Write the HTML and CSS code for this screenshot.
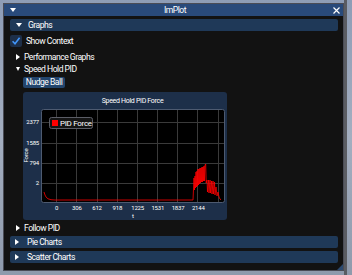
FILE: index.html
```html
<!DOCTYPE html>
<html>
<head>
<meta charset="utf-8">
<link rel="stylesheet" href="styles.css">
</head>
<body>
<div class="window">
  <div class="titlebar">
    <span class="tri-down tb-tri"></span>
    <span class="title">ImPlot</span>
    <svg class="close" width="7" height="7" viewBox="0 0 7 7"><path d="M0.5 0.5L6.5 6.5M6.5 0.5L0.5 6.5" stroke="#fff" stroke-width="1.2"/></svg>
  </div>
  <div class="content">
    <div class="header"><span class="tri-down"></span><span>Graphs</span></div>
    <div class="check"><span class="box"><svg width="12" height="12" viewBox="0 0 12 12"><path d="M2.6 6.2L5 8.7L9.6 2.8" fill="none" stroke="#4296fa" stroke-width="1.6"/></svg></span><span>Show Context</span></div>
    <div class="node"><span class="tri-right"></span><span>Performance Graphs</span></div>
    <div class="node"><span class="tri-down small"></span><span>Speed Hold PID</span></div>
    <div class="indent">
      <div class="btn">Nudge Ball</div>
      <div class="plot">
        <svg width="204" height="128" viewBox="0 0 204 128">
          <text class="ptitle" x="109.5" y="11" text-anchor="middle">Speed Hold PID Force</text>
          <rect x="18.5" y="17.5" width="183" height="93" rx="2" fill="#000" stroke="#4d5a70"/>
          <g stroke="#3a3a3a" stroke-width="1">
            <path d="M33.5 18V110M53.5 18V110M74.5 18V110M94.5 18V110M114.5 18V110M134.5 18V110M154.5 18V110M174.5 18V110M195.5 18V110"/>
            <path d="M19 30.5H201M19 51.5H201M19 71.5H201M19 91.5H201"/>
          </g>
          <g class="tick" text-anchor="end">
            <text x="16" y="32.3">2377</text>
            <text x="16" y="53.3">1585</text>
            <text x="16" y="73.3">794</text>
            <text x="16" y="93.3">2</text>
          </g>
          <text class="tick" transform="translate(5 63.5) rotate(-90)" text-anchor="middle">Force</text>
          <g class="tick" text-anchor="middle">
            <text x="33.5" y="118.3">0</text>
            <text x="53.8" y="118.3">306</text>
            <text x="74" y="118.3">612</text>
            <text x="94.3" y="118.3">918</text>
            <text x="114.6" y="118.3">1225</text>
            <text x="134.8" y="118.3">1531</text>
            <text x="155" y="118.3">1837</text>
            <text x="175.3" y="118.3">2144</text>
            <text x="110" y="126">t</text>
          </g>
          <polyline fill="none" stroke="#ff0000" stroke-width="0.8" stroke-linejoin="round" points="21,100 22,103 23,105 25,106.8 28,107.7 32,108 169,108 170,108 171,86 171.5,98 172,84 172.5,96 173,80 173.5,95 174,79 174.5,94 175,77 175.5,93 176,77 176.5,92 177,76 177.5,91 178,76 178.5,90 179,75 179.5,90 180,75 180.5,89 181,74 181.5,89 182,73 182.7,72 183.2,91 184,88 184.5,100 185.5,88 186,101 187,88 187.5,101 188.5,89 189,102 190,89 190.5,102 191.5,90 192,103 193,95 194,104 195,100 196,105 197,107 198,108"/>
          <rect x="26.5" y="25.5" width="43" height="11" rx="2" fill="#141414" stroke="#5b5d66"/>
          <rect x="29" y="28" width="6" height="6" fill="#ff0000"/>
          <text class="leg" x="37" y="33.8">PID Force</text>
        </svg>
      </div>
    </div>
    <div class="node follow"><span class="tri-right"></span><span>Follow PID</span></div>
    <div class="header pie"><span class="tri-right"></span><span>Pie Charts</span></div>
    <div class="header scatter"><span class="tri-right"></span><span>Scatter Charts</span></div>
  </div>
  <div class="grip"></div>
</div>
</body>
</html>
```

FILE: styles.css
```css
* { box-sizing: border-box; }
html, body { margin: 0; padding: 0; }
body {
  width: 352px;
  height: 275px;
  overflow: hidden;
  background:
    linear-gradient(90deg, transparent 344px, #5a5c62 344px, #5a5c62 347px, transparent 347px),
    linear-gradient(180deg, #8e9db6 0%, #a3aec0 50%, #8f9aac 100%);
  font-family: Roboto, "Noto Sans", sans-serif;
  font-size: 8.6px;
  letter-spacing: -0.5px;
  color: #fff;
}
.window {
  position: relative;
  margin: 3px 0 0 3px;
  width: 341px;
  height: 268px;
  background: #121212;
  border: 1px solid #4a4c56;
}
.titlebar {
  height: 12px;
  background: #294a7a;
  display: grid;
  grid-template-columns: 1fr auto 1fr;
  align-items: center;
  padding: 0 3px 0 6px;
}
.title { line-height: 12px; }
.close { justify-self: end; }
.tri-down {
  display: inline-block;
  width: 0; height: 0;
  border-left: 3px solid transparent;
  border-right: 3px solid transparent;
  border-top: 4px solid #fff;
}
.tri-down.small {
  border-left-width: 2.5px;
  border-right-width: 2.5px;
  border-top-width: 4px;
}
.tri-right {
  display: inline-block;
  width: 0; height: 0;
  border-top: 3px solid transparent;
  border-bottom: 3px solid transparent;
  border-left: 4px solid #fff;
}
.content {
  display: flex;
  flex-direction: column;
  padding: 3px 5px 0 6px;
}
.header {
  height: 12px;
  background: #1f3958;
  border-radius: 2px;
  display: flex;
  align-items: center;
  gap: 6px;
  padding-left: 6px;
}
.header .tri-right { margin-left: -1px; margin-right: 2px; }
.check {
  margin-top: 4px;
  height: 12px;
  display: flex;
  align-items: center;
  gap: 4px;
}
.box {
  width: 12px;
  height: 12px;
  background: #1d2f49;
  border-radius: 2px;
  display: block;
}
.box svg { display: block; }
.node {
  height: 12px;
  display: flex;
  align-items: center;
  gap: 4px;
  padding-left: 6px;
}
.check + .node { margin-top: 4px; }
.indent {
  padding-left: 13px;
  display: flex;
  flex-direction: column;
  align-items: flex-start;
}
.btn {
  margin-top: 2px;
  width: 42px;
  height: 11px;
  line-height: 11px;
  background: #23456d;
  border-radius: 2px;
  text-align: center;
}
.plot {
  margin-top: 4px;
  width: 204px;
  height: 128px;
  background: #1d2f49;
  border-radius: 3px;
}
.plot svg { display: block; }
.ptitle { font-size: 7px; fill: #fff; letter-spacing: -0.3px; }
.tick { font-size: 6px; fill: #fff; letter-spacing: -0.2px; }
.leg { font-size: 8px; fill: #fff; letter-spacing: -0.3px; }
.follow { margin-top: 2px; }
.pie { margin-top: 2px; }
.scatter { margin-top: 3px; }
.grip {
  position: absolute;
  right: 0;
  bottom: 0;
  width: 0; height: 0;
  border-left: 6px solid transparent;
  border-bottom: 6px solid #2c4a70;
}
```
